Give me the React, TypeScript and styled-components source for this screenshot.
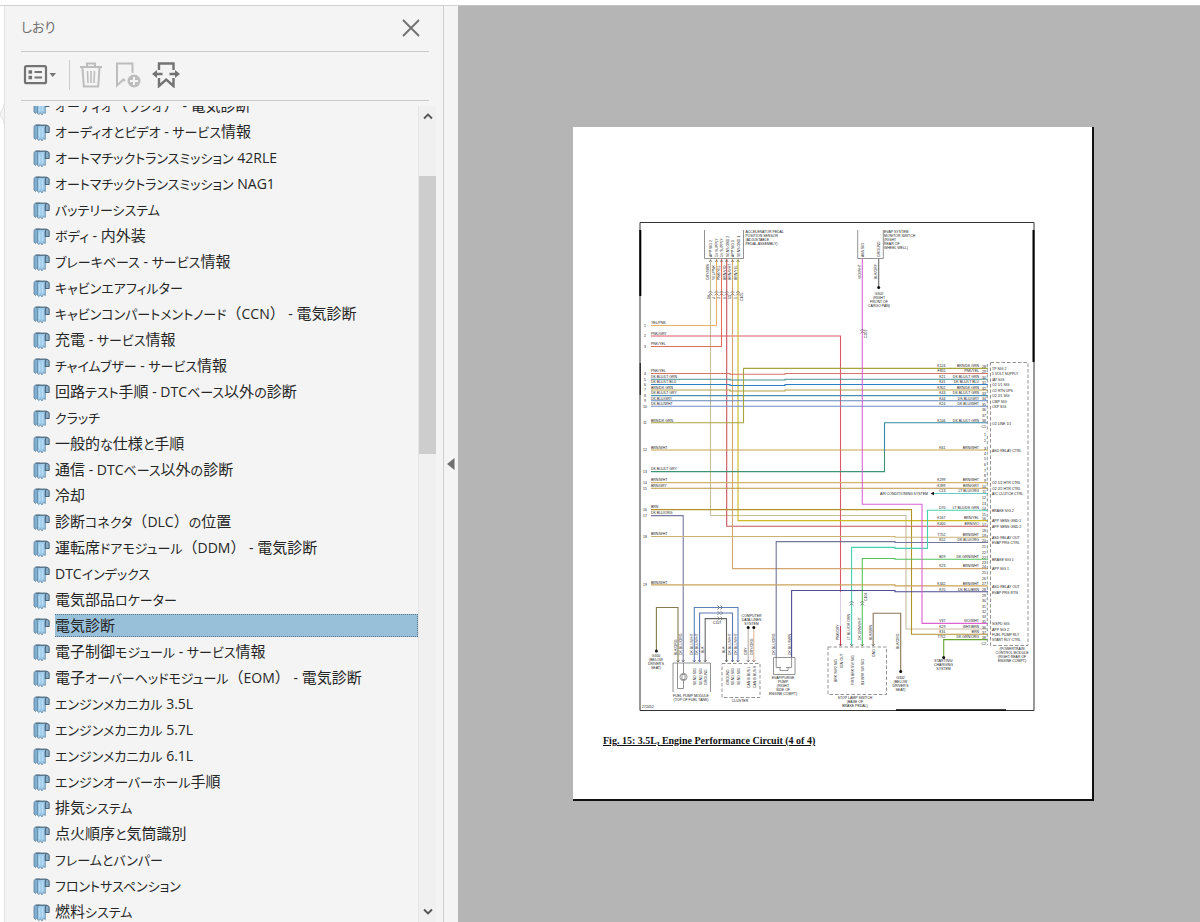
import React from "react";
import styled, { createGlobalStyle } from "styled-components";

const GlobalStyle = createGlobalStyle`
  * { box-sizing: border-box; }
  body {
    margin: 0;
    background: #fff;
    font-family: "Open Sans", "Noto Sans CJK JP", sans-serif;
  }
`;

const Shell = styled.div`
  display: flex;
  height: 100vh;
  padding-top: 5px;
  overflow: hidden;
`;

const Rail = styled.div`
  flex: none;
  width: 4px;
  padding-top: 98px;
  background: #fff;
  border-top: 1px solid #d2d2d2;
  svg { display: block; }
`;

const Sidebar = styled.aside`
  display: flex;
  flex-direction: column;
  flex: none;
  width: 440px;
  padding-left: 16px;
  background: #f4f4f4;
  border: solid #cfcfcf;
  border-width: 1px 1px 0 1px;
  border-left-color: #e2e2e2;
`;

const PanelHeader = styled.header`
  display: flex;
  align-items: center;
  justify-content: space-between;
  height: 46px;
  margin-right: 14px;
  padding: 0 8px 2px 0;
  border-bottom: 1px solid #c8c8c8;
`;

const PanelTitle = styled.h1`
  margin: 0;
  padding-bottom: 2px;
  font-size: 13px;
  font-weight: 400;
  line-height: 20px;
  color: #6e6e6e;
  font-feature-settings: "palt";
`;

const IconButton = styled.button<{ $width: number }>`
  display: flex;
  align-items: center;
  justify-content: center;
  width: ${(p) => p.$width}px;
  height: 32px;
  padding: 0;
  border: 0;
  background: none;
  color: #737373;
  &:disabled { color: #bdbdbd; }
  svg { display: block; }
`;

const Toolbar = styled.div`
  display: flex;
  align-items: center;
  height: 49px;
  margin-right: 14px;
  padding-bottom: 2px;
  border-bottom: 1px solid #c8c8c8;
`;

const Separator = styled.span`
  width: 1px;
  height: 30px;
  margin: 0 2px 0 11px;
  background: #cccccc;
`;

const ListArea = styled.div`
  display: flex;
  flex: 1;
  min-height: 0;
  margin: 5px 7px 0 0;
`;

const BookmarkList = styled.ul`
  flex: 1;
  min-width: 0;
  margin: 0;
  padding: 0 0 0 12px;
  list-style: none;
  overflow: hidden;
  li:first-child { margin-top: -14px; }
`;

const BookmarkLink = styled.a`
  display: flex;
  align-items: center;
  gap: 5px;
  height: 26px;
  color: #262626;
  text-decoration: none;
  svg {
    flex: none;
    margin-top: 3px;
  }
`;

const Label = styled.span<{ $selected: boolean }>`
  flex: 1;
  height: 23px;
  font-size: 15px;
  line-height: 21px;
  white-space: pre;
  border: 1px dotted ${(p) => (p.$selected ? "#55728a" : "transparent")};
  border-left-width: 0;
  background: ${(p) => (p.$selected ? "#99c0d9" : "transparent")};
`;

const Kana = styled.span`
  font-size: 13px;
  font-feature-settings: "palt";
`;

const Latin = styled.span`
  font-size: 14px;
`;

const Scrollbar = styled.div`
  display: flex;
  flex-direction: column;
  width: 18px;
  background: #f0f0f0;
  border-left: 1px solid #e6e6e6;
`;

const ScrollButton = styled.button`
  display: flex;
  align-items: center;
  justify-content: center;
  height: 20px;
  padding: 0;
  border: 0;
  background: none;
`;

const ScrollSpace = styled.div<{ $grow: number; $thumb?: boolean }>`
  flex: ${(p) => p.$grow} 0 0;
  background: ${(p) => (p.$thumb ? "#cdcdcd" : "transparent")};
`;

const CollapseButton = styled.button`
  flex: none;
  display: flex;
  align-items: center;
  justify-content: center;
  width: 14px;
  padding: 0;
  border: 0;
  border-top: 1px solid #d2d2d2;
  background: #f4f4f4;
`;

const Viewer = styled.main`
  flex: 1;
  display: flex;
  align-items: center;
  justify-content: center;
  min-width: 0;
  padding-left: 9px;
  background: #b5b5b5;
  border-top: 1px solid #c4c4c4;
`;

const Sheet = styled.article`
  display: flex;
  flex-direction: column;
  flex: none;
  width: 521px;
  padding: 95px 30px 51px;
  background: #fff;
  border: solid #111;
  border-width: 0 2px 2px 0;
`;

const Diagram = styled.svg`
  display: block;
  width: 396px;
  margin-left: 36px;
  font-family: "Liberation Sans", sans-serif;
`;

const Caption = styled.p`
  margin: 23px 0 0;
  font-family: "Liberation Serif", serif;
  font-size: 10px;
  line-height: 14px;
  font-weight: 700;
  color: #111;
  text-decoration: underline;
`;

const bookmarks = [
  "オーディオ（ラジオ） - 電気診断",
  "オーディオとビデオ - サービス情報",
  "オートマチックトランスミッション 42RLE",
  "オートマチックトランスミッション NAG1",
  "バッテリーシステム",
  "ボディ - 内外装",
  "ブレーキベース - サービス情報",
  "キャビンエアフィルター",
  "キャビンコンパートメントノード（CCN） - 電気診断",
  "充電 - サービス情報",
  "チャイムブザー - サービス情報",
  "回路テスト手順 - DTCベース以外の診断",
  "クラッチ",
  "一般的な仕様と手順",
  "通信 - DTCベース以外の診断",
  "冷却",
  "診断コネクタ（DLC）の位置",
  "運転席ドアモジュール（DDM） - 電気診断",
  "DTCインデックス",
  "電気部品ロケーター",
  "電気診断",
  "電子制御モジュール - サービス情報",
  "電子オーバーヘッドモジュール（EOM） - 電気診断",
  "エンジンメカニカル 3.5L",
  "エンジンメカニカル 5.7L",
  "エンジンメカニカル 6.1L",
  "エンジンオーバーホール手順",
  "排気システム",
  "点火順序と気筒識別",
  "フレームとバンパー",
  "フロントサスペンション",
  "燃料システム",
];
const selectedBookmark = "電気診断";

/* Kana and Latin runs are set slightly smaller than kanji. */
function MixedText({ text }: { text: string }) {
  const runs = text.match(/[\u3040-\u30ff]+|[ -~]+|[^\u3040-\u30ff -~]+/g) ?? [];
  return (
    <>
      {runs.map((run, i) => {
        if (/^[\u3040-\u30ff]/.test(run)) return <Kana key={i}>{run}</Kana>;
        if (/^[ -~]/.test(run)) return <Latin key={i}>{run}</Latin>;
        return <React.Fragment key={i}>{run}</React.Fragment>;
      })}
    </>
  );
}

const BookmarkIcon = () => (
  <svg width="17" height="18" viewBox="0 0 17 18" aria-hidden="true">
    <path d="M1 14V3.500C1 2 1.700 1 3 1h4V12.500l-1.500 2.500-1.500-1.500-1.500 2z" fill="#7fb0d2" stroke="#5a7a92" strokeWidth=".8" />
    <path d="M4.500 15.500V4c0-1.700.8-2.700 2.200-2.700h7.300c-1.200.4-1.700 1.200-1.700 2.700v11.500l-1.600-1.200-1.700 2.700-1.500-2.300-1.400 1.800z" fill="#9fcbea" stroke="#6288a4" strokeWidth=".8" />
    <path d="M6.700 4.500v8.500M9.500 4v9" stroke="#bbdcf3" strokeWidth="1.200" />
    <path d="M3 1.200h10.500" stroke="#4a6678" strokeWidth="1" />
    <path d="M12.300 8.500V4c0-1.600.5-2.500 1.800-2.500s2.100.9 2.100 2.500v4.500z" fill="#86acc6" stroke="#3d566a" strokeWidth=".9" />
  </svg>
);

type Pt = [number, number];
const w = (color: string, ...pts: Pt[]) => ({ color, d: "M" + pts.map((p) => p.join(" ")).join("L") });

const wires = [
  w("#c9bda0", [710.5, 259], [710.5, 515.5], [906, 515.5], [906, 629], [988, 629]),
  w("#e8b268", [651, 325.5], [716.5, 325.5], [716.5, 259]),
  w("#e2705a", [651, 346.5], [721.5, 346.5], [721.5, 259]),
  w("#dc5866", [651, 336], [840.5, 336], [840.5, 592]),
  w("#c8545a", [726.7, 259], [726.7, 526.3], [988, 526.3]),
  w("#d2a670", [732.5, 259], [732.5, 568.6], [988, 568.6]),
  w("#cdbb22", [738, 259], [738, 520.6], [988, 520.6]),
  w("#da7464", [651, 373.5], [730, 373.5], [730, 374.3], [785, 374.3], [785, 373.5], [988, 373.5]),
  w("#4a8f94", [651, 379.3], [730, 379.3], [730, 380], [785, 380], [785, 379.3], [988, 379.3]),
  w("#2d7fc4", [651, 384.5], [730, 384.5], [730, 385.5], [785, 385.5], [785, 384.5], [988, 384.5]),
  w("#b3a045", [651, 390], [730, 390], [730, 391], [785, 391], [785, 390], [988, 390]),
  w("#4b90ae", [651, 395.6], [988, 395.6]),
  w("#5f87bd", [651, 400.7], [988, 400.7]),
  w("#6d92c8", [651, 406.3], [988, 406.3]),
  w("#a8a43c", [651, 422.7], [743.5, 422.7], [743.5, 368.4], [988, 368.4]),
  w("#c8a24c", [651, 450], [988, 450]),
  w("#3d9573", [651, 471.6], [884.5, 471.6], [884.5, 450]),
  w("#3589a0", [884.5, 451], [884.5, 422.7], [988, 422.7]),
  w("#d2b266", [651, 482.6], [988, 482.6]),
  w("#bd9440", [651, 488.3], [988, 488.3]),
  w("#62cfcb", [934, 493.5], [988, 493.5]),
  w("#b39227", [651, 509.6], [911.5, 509.6], [911.5, 634.2], [988, 634.2]),
  w("#77799f", [651, 515.6], [683.2, 515.6], [683.2, 662]),
  w("#c9b274", [651, 536.5], [895, 536.5], [895, 537.3], [988, 537.3]),
  w("#73759b", [776.2, 657], [776.2, 541.6], [895, 541.6], [895, 542.5], [988, 542.5]),
  w("#42d2b2", [851.6, 646], [851.6, 547.4], [895, 547.4], [895, 548.4], [927.5, 548.4], [927.5, 510.2], [988, 510.2]),
  w("#55c35d", [862.3, 646], [862.3, 558.5], [895, 558.5], [895, 559.2], [988, 559.2]),
  w("#caa35a", [651, 584.9], [895, 584.9], [895, 585.9], [988, 585.9]),
  w("#4c4e93", [791.6, 657], [791.6, 590.5], [895, 590.5], [895, 591.7], [988, 591.7]),
  w("#dc63d2", [862.3, 259], [862.3, 504.3], [922, 504.3], [922, 623.4], [988, 623.4]),
  w("#66a72e", [943.7, 657], [943.7, 639.6], [988, 639.6]),
  w("#8b7556", [873.2, 646], [873.2, 613.3], [900.7, 613.3], [900.7, 671]),
  w("#847c50", [656.4, 651], [656.4, 607.5], [678, 607.5], [678, 662]),
  w("#6080bd", [694.3, 662], [694.3, 607.5], [738, 607.5], [738, 662]),
  w("#5b78b5", [699.6, 662], [699.6, 613], [732.5, 613], [732.5, 662]),
  w("#686868", [705.2, 662], [705.2, 618.6], [726.5, 618.6], [726.5, 662]),
  w("#b9b2ae", [748.2, 629], [748.2, 662]),
  w("#e4b79c", [753.8, 629], [753.8, 662]),
  w("#6d6d6d", [878.7, 259], [878.7, 287]),
  w("#d0394d", [840.5, 626], [840.5, 646]),
  w("#d9cfe0", [840.5, 592], [840.5, 626]),
];

const leftLabels: [number, string, string][] = [
  [325.5, "YEL/PNK", "1"], [336, "PNK/GRY", "2"], [346.5, "PNK/YEL", "3"],
  [373.5, "PNK/YEL", "4"], [379.3, "DK BLU/LT GRN", "5"], [384.5, "DK BLU/LT BLU", "6"],
  [390, "BRN/DK GRN", "7"], [395.6, "DK BLU/LT GRY", "8"], [400.7, "DK BLU/GRY", "9"],
  [406.3, "DK BLU/WHT", "10"], [422.7, "BRN/DK GRN", "11"], [450, "BRN/WHT", "12"],
  [471.6, "DK BLU/LT GRY", "13"], [482.6, "BRN/WHT", "14"], [488.3, "BRN/GRY", "15"],
  [509.6, "BRN", "16"], [515.6, "DK BLU/ORG", "17"], [536.5, "BRN/WHT", "18"], [584.9, "BRN/WHT", "19"],
];

const rightLabels: [number, string, string, string, string][] = [
  [368.4, "K124", "BRN/DK GRN", "28", "TP SIG 2"],
  [373.5, "F855", "PNK/YEL", "29", "5 VOLT SUPPLY"],
  [379.3, "K21", "DK BLU/LT GRN", "30", "IAT SIG"],
  [384.5, "K41", "DK BLU/LT BLU", "31", "O2 1/1 SIG"],
  [390, "K902", "BRN/DK GRN", "32", "O2 RTN UPS"],
  [395.6, "K43", "DK BLU/LT GRN", "33", "O2 2/1 SIG"],
  [400.7, "K44", "DK BLU/GRY", "34", "CMP SIG"],
  [406.3, "K24", "DK BLU/WHT", "35", "CKP SIG"],
  [422.7, "K106", "DK BLU/LT GRN", "38", "O2 LINE 1/1"],
  [450, "K61", "BRN/WHT", "3", "ASD RELAY CTRL"],
  [482.6, "K299", "BRN/WHT", "9", "O2 1/2 HTR CTRL"],
  [488.3, "K399", "BRN/GRY", "10", "O2 2/2 HTR CTRL"],
  [493.5, "C13", "LT BLU/ORG", "11", "A/C CLUTCH CTRL"],
  [510.2, "D70", "LT BLU/DK GRN", "14", "BRAKE SIG 2"],
  [520.6, "K167", "BRN/YEL", "16", "APP SENS GND 1"],
  [526.3, "K400", "BRN/VIO", "17", "APP SENS GND 2"],
  [537.3, "T752", "BRN/WHT", "19", "ASD RELAY OUT"],
  [542.5, "K52", "DK BLU/ORG", "20", "EVAP PRG CTRL"],
  [559.2, "B29", "DK GRN/WHT", "22", "BRAKE SIG 1"],
  [568.6, "K23", "BRN/WHT", "24", "APP SIG 1"],
  [585.9, "K342", "BRN/WHT", "27", "ASD RELAY OUT"],
  [591.7, "K70", "DK BLU/BRN", "28", "EVAP PRG RTN"],
  [623.4, "V37", "VIO/WHT", "35", "S/SPD SIG"],
  [629, "K29", "WHT/BRN", "36", "APP SIG 2"],
  [634.2, "K31", "BRN", "37", "FUEL PUMP RLY"],
  [639.6, "T752", "DK GRN/ORG", "38", "START RLY CTRL"],
];

const emptyPins: [number, string][] = [
  [411, "36"], [417, "37"], [428, "C1"], [436, "1"], [442, "2"], [455, "4"], [460, "5"], [466, "6"],
  [472, "7"], [477, "8"], [499, "12"], [505, "13"], [515.5, "15"], [531.5, "18"], [548, "21"],
  [553.5, "22"], [564, "23"], [574, "25"], [580, "26"], [597, "29"], [602, "30"], [608, "31"],
  [613, "32"], [618, "33"], [645, "C2"],
];

const verticalLabels: [number, number, string][] = [
  [712, 257, "APP SIG 2"], [718, 257, "5V SUPPLY"], [723, 257, "5V SUPPLY"],
  [728.5, 257, "SENS GND 2"], [734, 257, "APP SIG 1"], [739.5, 257, "SENS GND 1"],
  [709, 280, "GRY/BRN"], [714.5, 280, "YEL/PNK"], [720, 280, "PNK/YEL"],
  [725.5, 280, "BRN/VIO"], [731, 280, "BRN/WHT"], [736.5, 280, "BRN/YEL"],
  [864, 257, "ABS SIG"], [880, 257, "GROUND"], [860.5, 279, "VIO/WHT"], [877, 279, "BLK/GRY"],
  [676.5, 655, "BLK/ORG"], [681.5, 655, "DK BLU/ORG"], [692.5, 655, "DK BLU/WHT"],
  [698, 655, "DK BLU/WHT"], [703.5, 653, "BLK"],
  [725, 653, "BLK"], [731, 655, "DK BLU/WHT"], [736.5, 655, "DK BLU/WHT"],
  [747, 655, "GRY"], [752.5, 655, "GRY/ORG"],
  [696, 685, "SEND SIG"], [701.5, 685, "SEND SIG"], [707, 685, "GROUND"],
  [728.5, 685, "GROUND"], [734, 685, "SEND SIG"], [739.5, 685, "SEND SIG"],
  [750, 688, "CAN B BUS L"], [755.5, 688, "CAN B BUS H"],
  [775, 655, "DK BLU/ORG"], [790.5, 655, "DK BLU/BRN"],
  [839, 640, "PNK/GRY"], [850, 640, "LT BLU/DK GRN"], [861, 640, "DK GRN/WHT"], [872, 640, "BLK/BRN"],
  [899, 649, "BLK/ORG"], [837, 682, "BRK SW2 SIG"], [843, 668, "IGN OUT"],
  [853.5, 685, "F/RS BRK SW SIG"], [864, 685, "B1 BRK SW SIG"], [875, 657, "GND"],
  [742.5, 301, "C105"], [867, 338, "C302"], [866.5, 601, "C104"],
];

const blocks: { x: number; y: number; anchor: "start" | "middle"; lines: string[] }[] = [
  { x: 745.5, y: 232.5, anchor: "start", lines: ["ACCELERATOR PEDAL", "POSITION SENSOR", "(ADJUSTABLE", "PEDAL ASSEMBLY)"] },
  { x: 884, y: 232.5, anchor: "start", lines: ["EVAP SYSTEM", "MONITOR SWITCH", "(RIGHT", "REAR OF", "WHEEL WELL)"] },
  { x: 879, y: 295, anchor: "middle", lines: ["G302", "(RIGHT", "FRONT OF", "CARGO PAN)"] },
  { x: 656, y: 657, anchor: "middle", lines: ["G300", "(BELOW", "DRIVER'S", "SEAT)"] },
  { x: 751.5, y: 616.5, anchor: "middle", lines: ["COMPUTER", "DATA LINES", "SYSTEM"] },
  { x: 691, y: 696.5, anchor: "middle", lines: ["FUEL PUMP MODULE", "(TOP OF FUEL TANK)"] },
  { x: 740, y: 701.5, anchor: "middle", lines: ["CLUSTER"] },
  { x: 717, y: 623.5, anchor: "middle", lines: ["C107"] },
  { x: 783, y: 679, anchor: "middle", lines: ["EVAP/PURGE", "PUMP", "(RIGHT", "SIDE OF", "ENGINE COMPT)"] },
  { x: 855, y: 699, anchor: "middle", lines: ["STOP LAMP SWITCH", "(BASE OF", "BRAKE PEDAL)"] },
  { x: 900.5, y: 678.5, anchor: "middle", lines: ["G302", "(BELOW", "DRIVER'S", "SEAT)"] },
  { x: 943.5, y: 662, anchor: "middle", lines: ["STARTING/", "CHARGING", "SYSTEM"] },
  { x: 1012, y: 650, anchor: "middle", lines: ["(POWERTRAIN", "CONTROL MODULE", "(RIGHT REAR OF", "ENGINE COMPT)"] },
];

const dots: Pt[] = [[878.7, 287.5], [656.4, 651], [748.2, 627.5], [753.8, 627.5], [900.7, 671.5], [943.7, 657.5]];

function WiringDiagram() {
  return (
    <Diagram viewBox="639 222 396 489" role="img" aria-label="3.5L engine performance circuit">
      <path d="M640 222.500H1034V710.500H640Z" fill="none" stroke="#333" strokeWidth="1" />
      <path d="M640.300 230V296M1033.500 230V362" stroke="#000" strokeWidth="2" />
      <path d="M896 710H1006" stroke="#000" strokeWidth="1.500" />
      <path d="M640.300 363V395" stroke="#333" strokeWidth="1.400" />
      <g fill="none" strokeWidth="1.100">
        {wires.map((wire, i) => (
          <path key={i} d={wire.d} stroke={wire.color} />
        ))}
      </g>
      <g fill="none" stroke="#777" strokeWidth=".8">
        <path d="M704.500 230V258.500H743.500V230M857.700 230V258.500H883.300V230" />
        <path d="M673 692V663H710.500V692M677.500 663V688.500H683.500V663" />
        <circle cx="683.500" cy="677" r="3.600" fill="#fff" />
        <path d="M682 674.500h3v5h-3z" />
        <path d="M773.500 657.500H795V674.500H773.500ZM776.200 657V667.500H781M791.600 657V667.500H786M780 667.500v3h8v-3" />
      </g>
      <g fill="none" stroke="#888" strokeWidth=".9" strokeDasharray="3.500 2">
        <path d="M990.500 362.500H1028V645.500H990.500Z" />
        <path d="M987.300 364V432M987.300 436V645" strokeDasharray="3 2.200" />
        <path d="M722 663.500H760V697.500H722Z" />
        <path d="M828 647H886.500V694.500H828Z" />
      </g>
      <g fill="none" stroke="#666" strokeWidth=".7">
        {[710.5, 716.5, 721.5, 726.7, 732.5, 738].map((x) => (
          <path key={x} d={`M${x - 2} 293l2-2 2 2M${x - 2} 295.500l2-2 2 2M${x - 1.5} 262l1.500-2 1.500 2`} />
        ))}
        {[851.6, 862.3].map((x) => (
          <path key={x} d={`M${x - 2} 603l2-2 2 2M${x - 2} 605.500l2-2 2 2`} />
        ))}
        <path d="M860.300 331l2-2 2 2M860.300 333.500l2-2 2 2" />
        {[607.5, 613, 618.6].map((y) => (
          <path key={y} d={`M717.500 ${y - 2}l2 2-2 2M720.500 ${y - 2}l2 2-2 2`} />
        ))}
        {[678, 683.2, 694.3, 699.6, 705.2, 726.5, 732.5, 738, 748.2, 753.8, 840.5, 851.6, 862.3, 873.2].map((x) => (
          <path key={x} d={`M${x - 1.5} ${x > 800 ? 644 : 660}l1.500 2 1.500-2`} />
        ))}
      </g>
      {dots.map(([x, y]) => (
        <circle key={`${x}-${y}`} cx={x} cy={y} r="1.500" fill="#111" />
      ))}
      <path d="M930.500 493.500l3.500-1.800v3.600z" fill="#111" />
      <g fontSize="3.500" fill="#222">
        {leftLabels.map(([y, name, pin]) => (
          <React.Fragment key={y}>
            <text x="651" y={y - 1.2}>{name}</text>
            <text x="645" y={y + 1.2} textAnchor="middle">{pin}</text>
          </React.Fragment>
        ))}
        {rightLabels.map(([y, code, color, pin, name]) => (
          <React.Fragment key={y}>
            <text x="945.500" y={y - 1.2} textAnchor="end">{code}</text>
            <text x="979" y={y - 1.2} textAnchor="end">{color}</text>
            <text x="986" y={y - 0.5} textAnchor="end">{pin}</text>
            <text x="992" y={y + 1.8}>{name}</text>
          </React.Fragment>
        ))}
        {emptyPins.map(([y, pin]) => (
          <text key={y} x="986" y={y} textAnchor="end">{pin}</text>
        ))}
        {verticalLabels.map(([x, y, text], i) => (
          <text key={i} transform={`translate(${x} ${y}) rotate(-90)`}>{text}</text>
        ))}
        {["16", "4", "3", "6", "15", "5"].map((pin, i) => (
          <text key={pin} transform={`translate(${709.5 + i * 5.4} 299) rotate(-90)`}>{pin}</text>
        ))}
        {blocks.map((b) =>
          b.lines.map((line, i) => (
            <text key={`${b.x}-${b.y}-${i}`} x={b.x} y={b.y + i * 4} textAnchor={b.anchor}>{line}</text>
          ))
        )}
        <text x="928" y="494.700" textAnchor="end">AIR CONDITIONING SYSTEM</text>
        <text x="642" y="708">272452</text>
      </g>
    </Diagram>
  );
}

export default function App() {
  return (
    <>
      <GlobalStyle />
      <Shell>
        <Rail>
          <svg width="4" height="20" viewBox="0 0 4 20" aria-hidden="true">
            <path d="M4 0C4 6 0 7 0 10s4 4 4 10z" fill="#f4f4f4" />
            <path d="M4 0C4 6 0 7 0 10s4 4 4 10" fill="none" stroke="#dedede" />
          </svg>
        </Rail>
        <Sidebar>
          <PanelHeader>
            <PanelTitle>しおり</PanelTitle>
            <IconButton $width={20} aria-label="閉じる">
              <svg width="20" height="20" viewBox="0 0 20 20" fill="none" stroke="currentColor" strokeWidth="2">
                <path d="M2 2l16 16M18 2L2 18" />
              </svg>
            </IconButton>
          </PanelHeader>
          <Toolbar>
            <IconButton $width={37} aria-label="オプション">
              <svg width="35" height="20" viewBox="0 0 35 20" fill="none" stroke="currentColor">
                <rect x="3" y="1.200" width="21" height="17" rx="1.500" strokeWidth="2.200" />
                <path d="M12.500 7h7.500M12.500 12.500h7.500" strokeWidth="1.800" />
                <path d="M6.500 5.200h3.600v3.600H6.500zM6.500 10.700h3.600v3.600H6.500z" fill="currentColor" stroke="none" />
                <path d="M27.500 8h6.500l-3.250 4z" fill="currentColor" stroke="none" />
              </svg>
            </IconButton>
            <Separator />
            <IconButton $width={37} aria-label="削除" disabled>
              <svg width="24" height="26" viewBox="0 0 24 26" fill="none" stroke="currentColor" strokeWidth="2">
                <path d="M1 5h22M8 4.500V1.500h8v3M3.500 6l1.300 18.500h14.400L20.500 6" />
                <path d="M8.500 9l.5 12M12 9v12M15.500 9l-.5 12" strokeWidth="1.600" />
              </svg>
            </IconButton>
            <IconButton $width={38} aria-label="しおりを追加" disabled>
              <svg width="26" height="26" viewBox="0 0 26 26" fill="none" stroke="currentColor" strokeWidth="2">
                <path d="M10 19l-1.500-1.500L2 23.500V1.500h15.500V11" />
                <circle cx="19" cy="19" r="6.500" fill="currentColor" stroke="none" />
                <path d="M19 15v8M15 19h8" stroke="#f4f4f4" />
              </svg>
            </IconButton>
            <IconButton $width={37} aria-label="現在のしおりを表示">
              <svg width="28" height="26" viewBox="0 0 28 26" fill="none" stroke="currentColor" strokeWidth="2.400">
                <path d="M7 8V1.500h14.500V8M7 16v8l7.200-6.500 7.300 6.500v-8" />
                <path d="M3 12h7.500M17.500 12H25" />
                <path d="M0 12l5-4v8zM28 12l-5-4v8z" fill="currentColor" stroke="none" />
              </svg>
            </IconButton>
          </Toolbar>
          <ListArea>
            <BookmarkList>
              {bookmarks.map((name) => (
                <li key={name}>
                  <BookmarkLink href="#" aria-current={name === selectedBookmark ? "true" : undefined}>
                    <BookmarkIcon />
                    <Label $selected={name === selectedBookmark}>
                      <MixedText text={name} />
                    </Label>
                  </BookmarkLink>
                </li>
              ))}
            </BookmarkList>
            <Scrollbar>
              <ScrollButton aria-label="上へ">
                <svg width="10" height="8" viewBox="0 0 10 8" fill="none" stroke="#555" strokeWidth="1.800">
                  <path d="M1 6.500l4-4 4 4" />
                </svg>
              </ScrollButton>
              <ScrollSpace $grow={50} />
              <ScrollSpace $grow={277} $thumb />
              <ScrollSpace $grow={446} />
              <ScrollButton aria-label="下へ">
                <svg width="10" height="8" viewBox="0 0 10 8" fill="none" stroke="#555" strokeWidth="1.800">
                  <path d="M1 1.500l4 4 4-4" />
                </svg>
              </ScrollButton>
            </Scrollbar>
          </ListArea>
        </Sidebar>
        <CollapseButton aria-label="パネルを閉じる">
          <svg width="8" height="12" viewBox="0 0 8 12" aria-hidden="true">
            <path d="M7.500 0v12L0 6z" fill="#707070" />
          </svg>
        </CollapseButton>
        <Viewer>
          <Sheet>
            <WiringDiagram />
            <Caption>Fig. 15: 3.5L, Engine Performance Circuit (4 of 4)</Caption>
          </Sheet>
        </Viewer>
      </Shell>
    </>
  );
}
